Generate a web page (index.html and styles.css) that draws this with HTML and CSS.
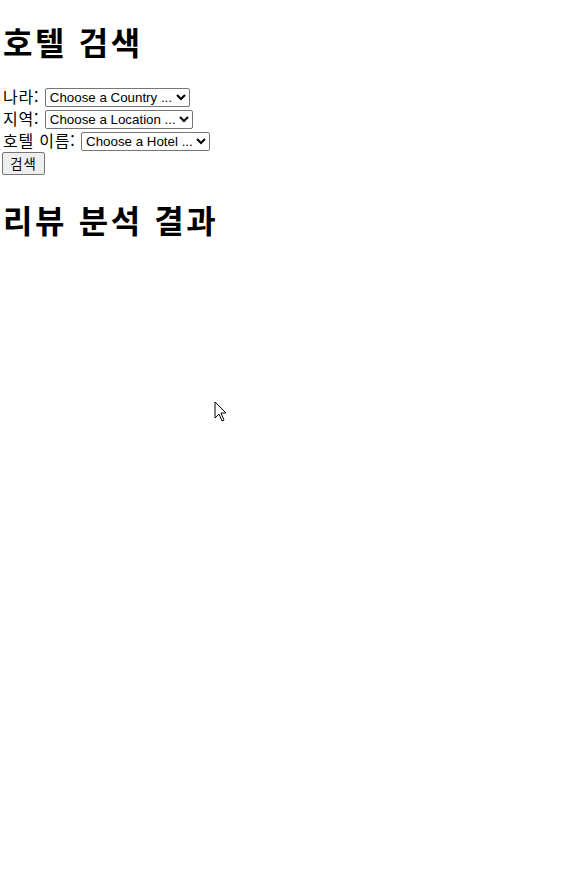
FILE: index.html
```html
<!DOCTYPE html>
<html lang="ko">
<head>
<meta charset="utf-8">
<title>호텔 검색</title>
<link rel="stylesheet" href="styles.css">
</head>
<body>
<h1 class="title">호텔 검색</h1>
<form class="search">
  <div class="row"><label for="country">나라:</label> <select id="country" class="pick"><option>Choose a Country ...</option></select></div>
  <div class="row"><label for="location">지역:</label> <select id="location" class="pick"><option>Choose a Location ...</option></select></div>
  <div class="row"><label for="hotel">호텔 이름:</label> <select id="hotel" class="pick"><option>Choose a Hotel ...</option></select></div>
  <div class="row btn-row"><button type="button" class="btn">검색</button></div>
</form>
<h1 class="title results">리뷰 분석 결과</h1>
<svg class="cursor" width="14" height="22" viewBox="0 0 14 22"><path d="M1 1 L1 17 L5 13 L8 20 L10 19 L7 12 L12 12 Z" fill="#fff" stroke="#000" stroke-width="1"/></svg>
</body>
</html>
```
FILE: styles.css
```css
html, body { background: #fff; }
body {
  margin: 0 2px;
  font-family: "Liberation Sans", "Noto Sans CJK KR", sans-serif;
  font-size: 16px;
  color: #000;
  position: relative;
  min-height: 872px;
}
.title {
  font-size: 32px;
  font-weight: bold;
  line-height: 37px;
  margin: 23px 0 25px;
  letter-spacing: 2.6px;
  padding-left: 1px;
  font-family: "Noto Sans CJK KR", "Liberation Sans", sans-serif;
}
.results { margin-top: 26px; }
.search { margin: 0; }
.row { line-height: 22px; height: 22px; }
.row label {
  font-family: "Noto Sans CJK KR", sans-serif;
  font-weight: 400;
  letter-spacing: 0.8px;
  padding-left: 1px;
  margin-right: 1px;
}
.pick {
  font-family: "Liberation Sans", Arial, sans-serif;
  font-size: 13.33px;
  height: 19px;
  border: 1px solid #767676;
  border-radius: 2px;
  background: #fff;
  vertical-align: 1px;
}
.btn-row { height: 23px; margin-top: 1px; }
.btn {
  font-family: "Noto Sans CJK KR", sans-serif;
  font-weight: 400;
  font-size: 13.33px;
  letter-spacing: 1px;
  height: 23px;
  width: 43px;
  padding: 0;
  border: 1px solid #767676;
  border-radius: 2px;
  background: #efefef;
  color: #000;
  vertical-align: top;
}
.cursor { position: absolute; left: 212px; top: 401px; }
```
